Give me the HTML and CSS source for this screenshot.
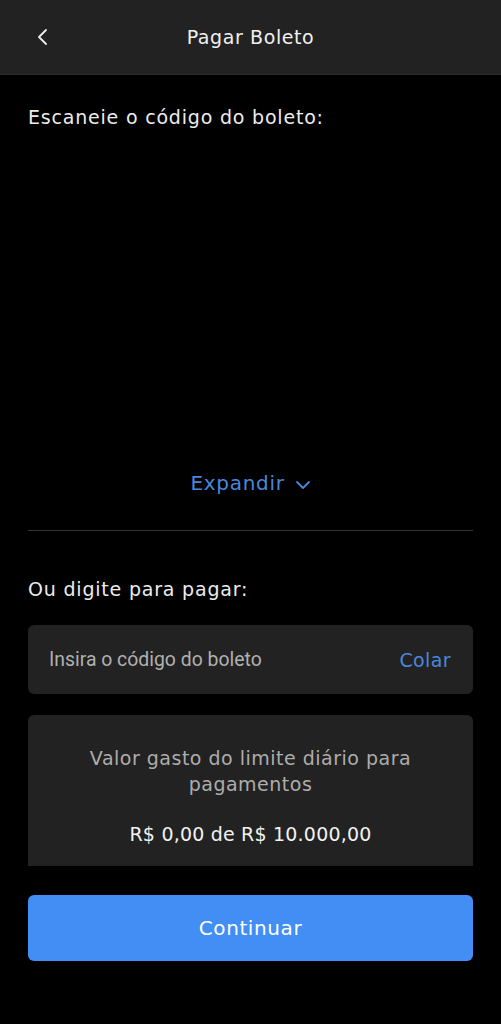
FILE: index.html
```html
<!DOCTYPE html>
<html>
	<head>
		<meta charset="UTF-8">
		<title>Pagar Boleto</title>
		<link rel="stylesheet" href="styles.css">
	</head>
	<body>
		<div class="app">
			<div class="header">
				<a class="back" href="#">
					<svg width="14" height="20" viewBox="0 0 14 20"><path d="M10 3 L3 10 L10 17" fill="none" stroke="#ececec" stroke-width="1.8" stroke-linecap="round" stroke-linejoin="round"/></svg>
				</a>
				<h1>Pagar Boleto</h1>
			</div>
			<div class="content">
				<p class="label">Escaneie o código do boleto:</p>
				<div class="scanner"></div>
				<a class="expand" href="#">Expandir
					<svg width="16" height="10" viewBox="0 0 16 10"><path d="M2 2 L8 8 L14 2" fill="none" stroke="#4a87dc" stroke-width="1.8" stroke-linecap="round" stroke-linejoin="round"/></svg>
				</a>
				<div class="divider"></div>
				<p class="label">Ou digite para pagar:</p>
				<div class="input">
					<span class="placeholder">Insira o código do boleto</span>
					<a class="paste" href="#">Colar</a>
				</div>
				<div class="limit">
					<p class="limit-title">Valor gasto do limite diário para pagamentos</p>
					<p class="limit-value">R$ 0,00 de R$ 10.000,00</p>
				</div>
			</div>
			<div class="footer">
				<button class="btn">Continuar</button>
			</div>
		</div>
	</body>
</html>
```
FILE: styles.css
```css
* {
	box-sizing: border-box;
}

body {
	margin: 0;
	background: #000000;
	font-family: "DejaVu Sans", "Open Sans", sans-serif;
	color: #ececec;
}

.app {
	width: 501px;
	height: 1024px;
	display: flex;
	flex-direction: column;
}

.header {
	height: 75px;
	flex-shrink: 0;
	background: #222222;
	border-bottom: 1px solid #2c2c2c;
	display: flex;
	align-items: center;
	justify-content: center;
	position: relative;
}

.header h1 {
	margin: 0;
	font-size: 19px;
	font-weight: normal;
	color: #f0f0f0;
	letter-spacing: 0.6px;
}

.back {
	position: absolute;
	left: 36px;
	top: 27px;
	display: block;
	line-height: 0;
}

.content {
	height: 791px;
	flex-shrink: 0;
	overflow: hidden;
	padding: 0 28px;
	display: flex;
	flex-direction: column;
}

.label {
	margin: 0;
	font-size: 19px;
	color: #ececec;
	letter-spacing: 0.8px;
}

.content > .label:first-child {
	margin-top: 31px;
}

.scanner {
	height: 343px;
	flex-shrink: 0;
}

.expand {
	display: flex;
	align-items: center;
	justify-content: center;
	gap: 10px;
	font-size: 20px;
	color: #4a87dc;
	text-decoration: none;
	letter-spacing: 0.7px;
	height: 24px;
	flex-shrink: 0;
}

.expand svg {
	margin-top: 4px;
}

.divider {
	height: 1px;
	flex-shrink: 0;
	background: #343434;
	margin: 35px 0 47px;
}

.input {
	margin-top: 25px;
	height: 69px;
	flex-shrink: 0;
	background: #222222;
	border-radius: 6px;
	display: flex;
	align-items: center;
	justify-content: space-between;
	padding: 0 22px 0 21px;
}

.placeholder {
	font-family: Roboto, sans-serif;
	font-size: 19.4px;
	color: #b0b0b0;
}

.paste {
	font-size: 19px;
	color: #4a87dc;
	text-decoration: none;
	letter-spacing: 0.4px;
}

.limit {
	margin-top: 21px;
	flex-shrink: 0;
	background: #222222;
	border-radius: 6px 6px 0 0;
	padding: 30px 30px 60px;
	text-align: center;
}

.limit-title {
	margin: 0;
	font-size: 19px;
	line-height: 26px;
	color: #adadad;
	letter-spacing: 0.5px;
}

.limit-value {
	margin: 26px 0 0;
	font-size: 19px;
	color: #f2f2f2;
	letter-spacing: 0.2px;
}

.footer {
	padding: 29px 28px 0;
}

.btn {
	width: 100%;
	height: 66px;
	border: none;
	border-radius: 6px;
	background: #428ef5;
	color: #ffffff;
	font-family: "DejaVu Sans", "Open Sans", sans-serif;
	font-size: 20px;
	letter-spacing: 0.6px;
}
```
